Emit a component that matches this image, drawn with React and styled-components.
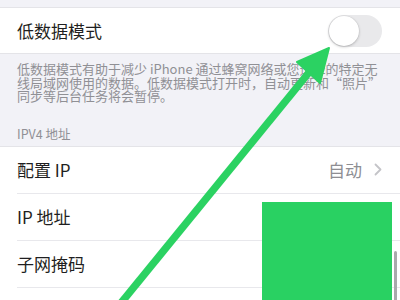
import React from 'react'
import styled, { createGlobalStyle } from 'styled-components'

const Global = createGlobalStyle`
    html, body {
        margin: 0;
        padding: 0;
        background: #f2f2f7;
    }
    #root {
        width: 400px;
        height: 300px;
        overflow: hidden;
    }
`

const Page = styled.div`
    position: relative;
    width: 400px;
    height: 300px;
    overflow: hidden;
    background: #f2f2f7;
    padding-top: 7px;
    box-sizing: border-box;
    font-family: "Noto Sans CJK SC", "Noto Sans", sans-serif;
`
const Group = styled.div`
    background: #fff;
    border-top: 1px solid #e4e4e8;
    border-bottom: 1px solid #e4e4e8;
`
const Row = styled.div`
    height: ${props => props.height}px;
    margin-left: 17px;
    padding-right: 18px;
    display: flex;
    align-items: center;
    justify-content: space-between;
    box-sizing: border-box;
    border-bottom: ${props => props.last ? 'none' : '1px solid #e8e8ec'};
`
const Title = styled.span`
    font-size: 17px;
    color: #1f1f21;
    letter-spacing: 0;
`
const Value = styled.span`
    display: flex;
    align-items: center;
    gap: 12px;
    font-size: 17px;
    color: #8e8e93;
`
const Footer = styled.div`
    padding: 8px 17px 0 17px;
    font-size: 13px;
    line-height: 13.5px;
    color: #909095;
    white-space: pre-line;
`
const Header = styled.div`
    padding: 24px 17px 5px 17px;
    font-size: 12.5px;
    line-height: 14px;
    color: #909095;
`
const Switch = styled.div`
    width: 54px;
    height: 32px;
    border-radius: 16px;
    background: #e9e9eb;
    position: relative;
`
const Knob = styled.div`
    position: absolute;
    left: 1px;
    top: 1px;
    width: 30px;
    height: 30px;
    border-radius: 50%;
    background: #fff;
    box-shadow: 0 1px 3px rgba(0, 0, 0, 0.22), 0 0 0 0.5px rgba(0, 0, 0, 0.06);
`
const Redact = styled.div`
    position: absolute;
    left: 262px;
    top: 202px;
    width: 130px;
    height: 110px;
    background: #29d162;
`
const Scrollbar = styled.div`
    position: absolute;
    left: 394px;
    top: 251px;
    width: 3px;
    height: 60px;
    border-radius: 2px;
    background: #a9a9ab;
`
const Overlay = styled.svg`
    position: absolute;
    left: 0;
    top: 0;
    pointer-events: none;
`

const Chevron = () => (
    <svg width="8" height="13" viewBox="0 0 8 13">
        <path d="M1.5 1.5 L6.5 6.5 L1.5 11.5" fill="none" stroke="#c4c4c8" strokeWidth="1.8" strokeLinecap="round" strokeLinejoin="round" />
    </svg>
)

export default function App() {
    return (
        <Page>
            <Global />
            <Group>
                <Row height={45} last>
                    <Title>低数据模式</Title>
                    <Switch><Knob /></Switch>
                </Row>
            </Group>
            <Footer>
                {'低数据模式有助于减少 iPhone 通过蜂窝网络或您选择的特定无\n线局域网使用的数据。低数据模式打开时，自动更新和“照片”\n同步等后台任务将会暂停。'}
            </Footer>
            <Header>IPV4 地址</Header>
            <Group>
                <Row height={47}>
                    <Title>配置 IP</Title>
                    <Value>自动<Chevron /></Value>
                </Row>
                <Row height={47}>
                    <Title>IP 地址</Title>
                </Row>
                <Row height={47}>
                    <Title>子网掩码</Title>
                </Row>
                <Row height={47} last />
            </Group>
            <Redact />
            <Scrollbar />
            <Overlay width="400" height="300" viewBox="0 0 400 300">
                <line x1="112" y1="314" x2="311" y2="70" stroke="#2bd262" strokeWidth="7.5" />
                <polygon points="329,48 297,62 320,83" fill="#2bd262" stroke="#2bd262" strokeWidth="2" strokeLinejoin="round" />
            </Overlay>
        </Page>
    )
}
